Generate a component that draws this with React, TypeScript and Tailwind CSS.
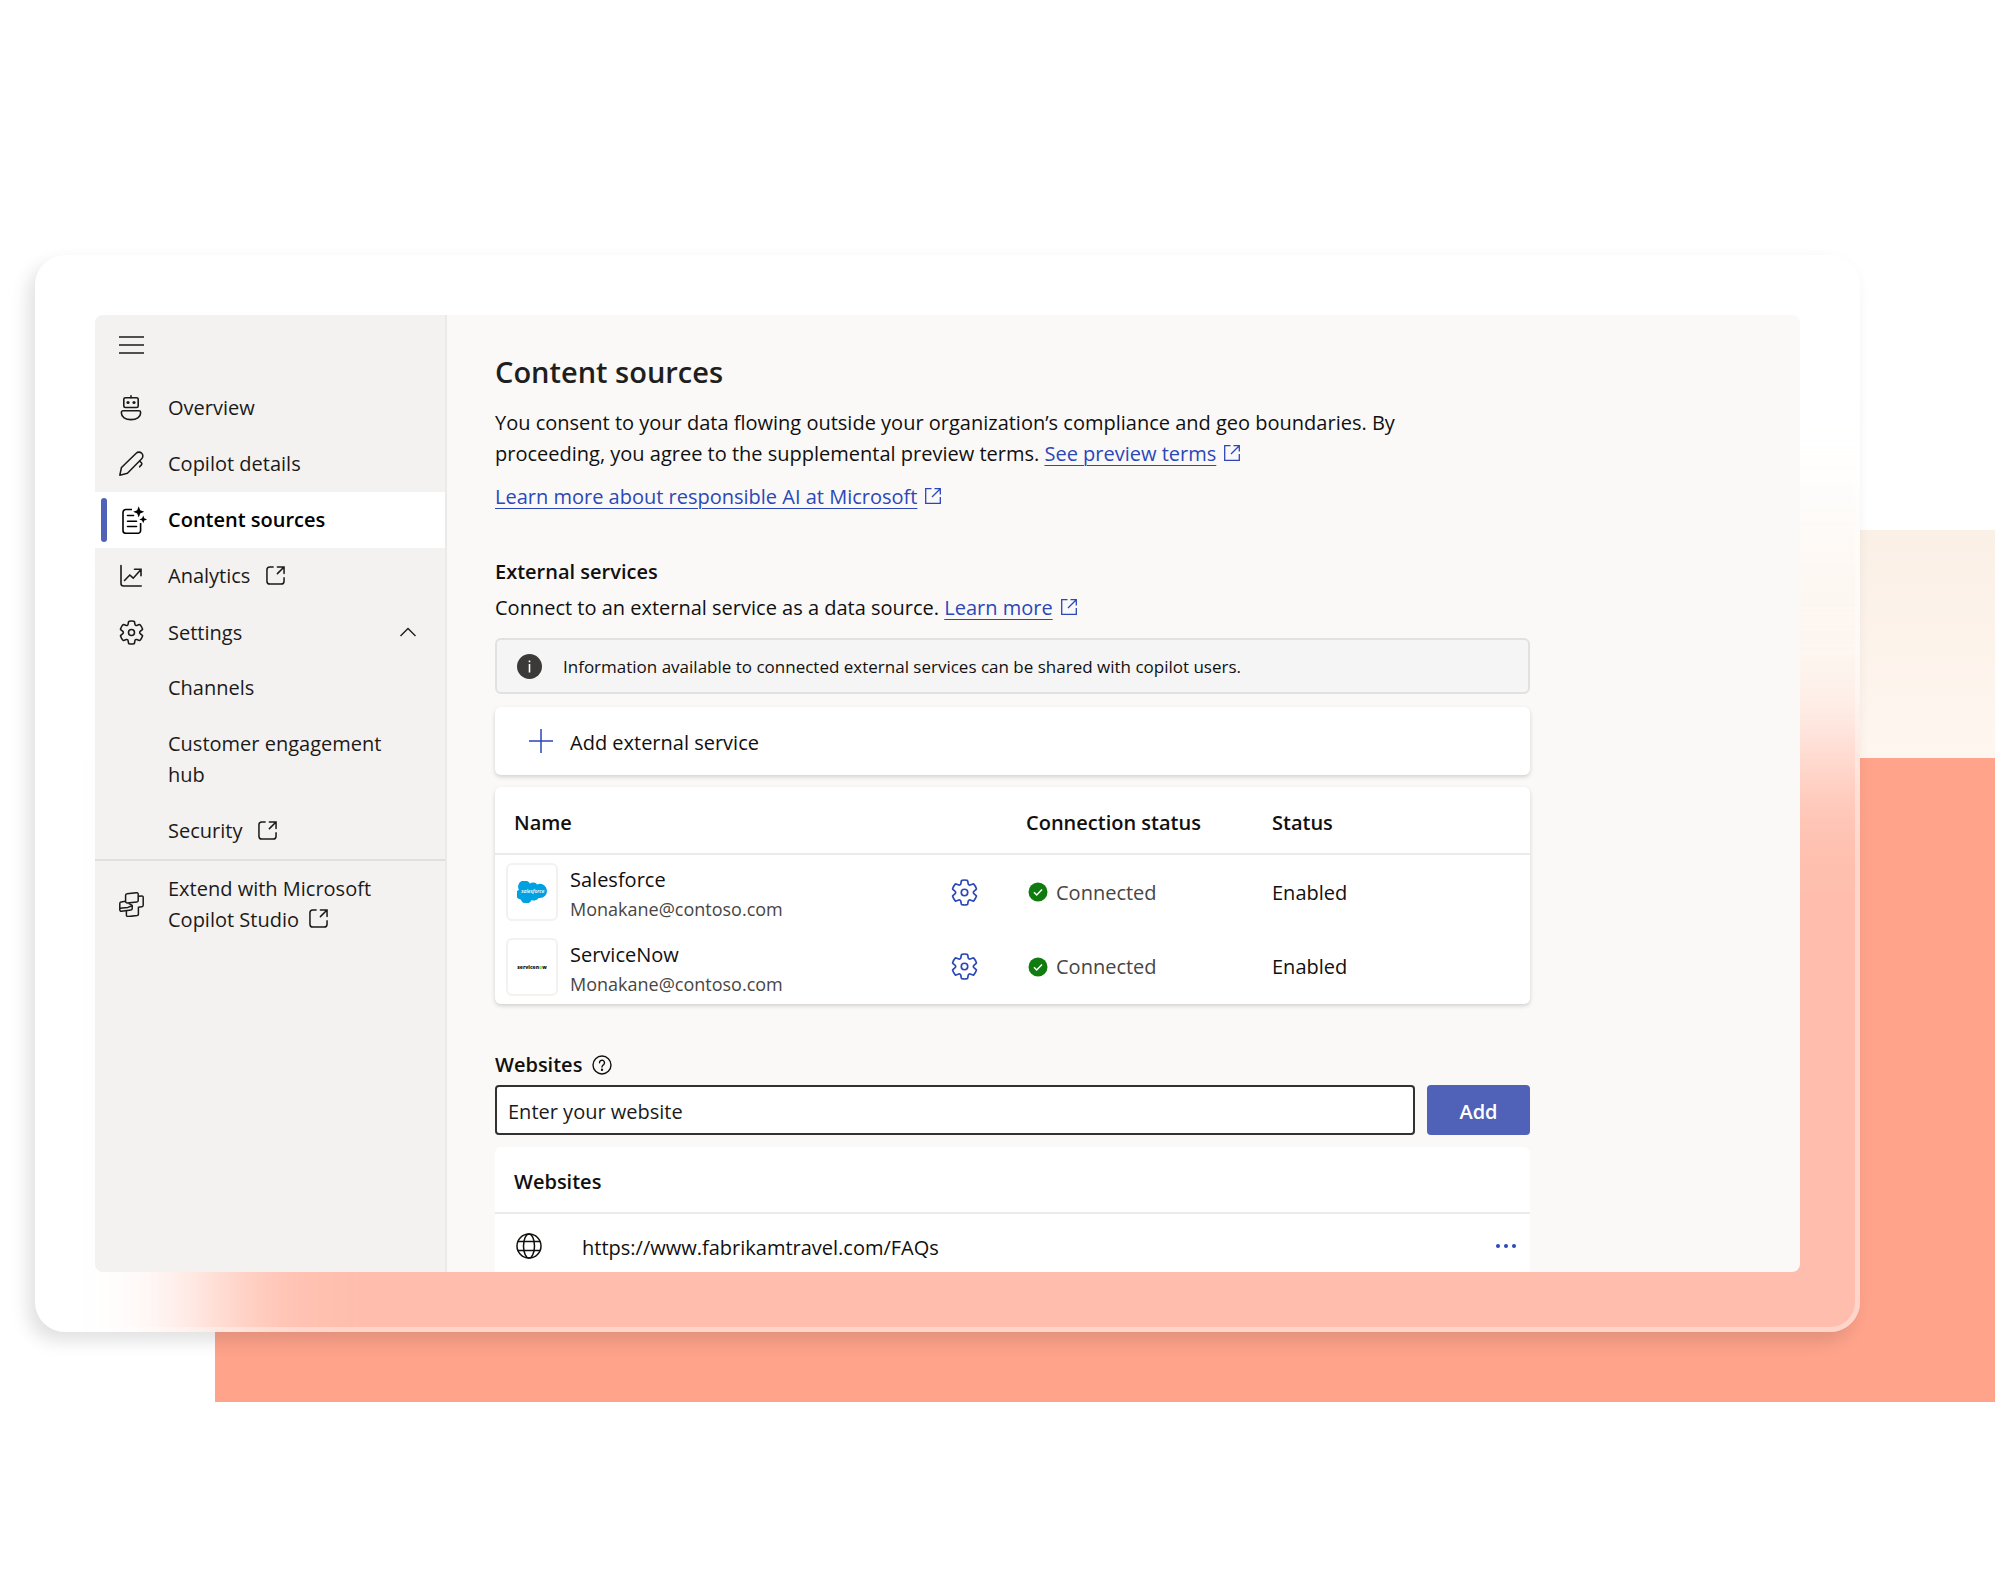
import { useState } from "react";
import type { ReactNode } from "react";

type NavItem = {
  id: string;
  label: string;
  icon?: ReactNode;
  external?: boolean;
};

type Service = {
  id: string;
  name: string;
  account: string;
  logo: ReactNode;
};

const GEAR_PATH =
  "M1.91 7.38A8.5 8.5 0 0 1 3.7 4.3a.5.5 0 0 1 .54-.13l1.92.68a1 1 0 0 0 1.32-.76l.36-2a.5.5 0 0 1 .4-.4 8.53 8.53 0 0 1 3.55 0c.2.04.35.2.38.4l.37 2a1 1 0 0 0 1.32.76l1.92-.68a.5.5 0 0 1 .54.13 8.5 8.5 0 0 1 1.78 3.08c.06.2 0 .4-.15.54l-1.56 1.32a1 1 0 0 0 0 1.52l1.56 1.32a.5.5 0 0 1 .15.54 8.5 8.5 0 0 1-1.78 3.08.5.5 0 0 1-.54.13l-1.92-.68a1 1 0 0 0-1.32.76l-.37 2a.5.5 0 0 1-.38.4 8.53 8.53 0 0 1-3.56 0 .5.5 0 0 1-.39-.4l-.36-2a1 1 0 0 0-1.32-.76l-1.92.68a.5.5 0 0 1-.54-.13 8.5 8.5 0 0 1-1.78-3.08.5.5 0 0 1 .15-.54l1.56-1.32a1 1 0 0 0 0-1.52L2.06 7.92a.5.5 0 0 1-.15-.54Z";

function GearIcon({ className = "" }: { className?: string }) {
  return (
    <svg viewBox="0.8 0.8 18.4 18.4" className={className} fill="none" stroke="currentColor" strokeWidth="1.15" aria-hidden="true">
      <path d={GEAR_PATH} />
      <circle cx="10" cy="10" r="2.2" />
    </svg>
  );
}

function BotIcon() {
  return (
    <svg viewBox="0 0 24 26" className="h-[26px] w-6 shrink-0" fill="none" stroke="currentColor" strokeWidth="1.6" aria-hidden="true">
      <path d="M12 .8v2" strokeLinecap="round" />
      <rect x="4.8" y="2.7" width="14.4" height="9.8" rx="1.6" />
      <circle cx="9" cy="7.5" r="1.6" fill="currentColor" stroke="none" />
      <circle cx="15" cy="7.5" r="1.6" fill="currentColor" stroke="none" />
      <path d="M4 15.8h16a1.6 1.6 0 0 1 1.6 1.6v.6c0 4-4 6.6-9.6 6.6S2.4 22 2.4 18v-.6A1.6 1.6 0 0 1 4 15.8Z" />
    </svg>
  );
}

function PenIcon() {
  return (
    <svg viewBox="0 0 24 24" className="size-[25px] shrink-0" fill="none" stroke="currentColor" strokeWidth="1.5" strokeLinejoin="round" strokeLinecap="round" aria-hidden="true">
      <path d="M.8 23.2l1.6-7.4L16.500 2.200a3.700 3.700 0 0 1 5.300 5.300L8.100 21.400Z" />
      <path d="M19.8 9.600l1.700 1.700a1.400 1.400 0 0 1 0 2L19.8 15.200" />
    </svg>
  );
}

function SourcesIcon() {
  return (
    <svg viewBox="-2 0 29 28" className="h-7 w-[29px] shrink-0" fill="none" stroke="currentColor" strokeWidth="1.6" aria-hidden="true">
      <path d="M11 3.500H4.800a2.800 2.800 0 0 0-2.800 2.800v18.200a2.800 2.800 0 0 0 2.800 2.800h12a2.800 2.800 0 0 0 2.800-2.800V17" />
      <path d="M6.500 9.500h6M6.500 15.200h9M6.500 20.500h9" strokeLinecap="round" />
      <path d="M17.700 0.200l1.500 4 4 1.600-4 1.600-1.500 4-1.500-4-4-1.600 4-1.600ZM22.200 9.500l1.100 2.800 2.800 1.100-2.800 1.100-1.100 2.800-1.100-2.800-2.800-1.100 2.800-1.100Z" fill="currentColor" stroke="none" />
    </svg>
  );
}

function AnalyticsIcon() {
  return (
    <svg viewBox="0 0 24 24" className="size-6 shrink-0" fill="none" stroke="currentColor" strokeWidth="1.600" strokeLinecap="round" aria-hidden="true">
      <path d="M2 1.500v18A2.500 2.500 0 0 0 4.500 22H22.200" />
      <path d="M5.500 16.500l5.300-5.500 3.400 3.200 7.600-8.500M15.500 5.300h6.500v6.500" />
    </svg>
  );
}

function ExtendIcon() {
  return (
    <svg viewBox="0 0 25 25" className="size-[25px] shrink-0" fill="none" stroke="currentColor" strokeWidth="1.500" strokeLinejoin="round" aria-hidden="true">
      <path d="M8 1.800l9.500-1.100a1.500 1.500 0 0 1 1.700 1.500v6.200a1.500 1.500 0 0 1-1.400 1.500l-9.500 1a1.500 1.500 0 0 1-1.700-1.500V3.300A1.500 1.500 0 0 1 8 1.800Z" />
      <path d="M6.600 9.300l-4.500.6A1.500 1.500 0 0 0 .8 11.400v6.300a1.500 1.500 0 0 0 1.700 1.500l9.400-1.100a1.500 1.500 0 0 0 1.300-1.500v-3.300l-3.600-1.900" />
      <path d="M.8 16.300l8-.9 4.400-1.700" />
      <path d="M19.200 4.300l3.600-.4a1.300 1.300 0 0 1 1.400 1.300v8a1.500 1.500 0 0 1-1.300 1.500l-3.500.5v6.900a1.500 1.500 0 0 1-1.300 1.500l-9 1a1.500 1.500 0 0 1-1.700-1.500v-4.200" />
    </svg>
  );
}

function OpenIcon({ className = "" }: { className?: string }) {
  return (
    <svg viewBox="0 0 20 20" className={className} fill="none" stroke="currentColor" strokeWidth="1.6" strokeLinecap="round" aria-hidden="true">
      <path d="M7.500 1H4a3 3 0 0 0-3 3v12a3 3 0 0 0 3 3h12a3 3 0 0 0 3-3v-3.500M12 1h7v7M19 1l-7 7" />
    </svg>
  );
}

function LinkIcon() {
  return (
    <svg viewBox="0 0 16 16" className="ml-2 inline-block size-4 align-baseline" fill="none" stroke="currentColor" strokeWidth="1.3" aria-hidden="true">
      <path d="M6.500 .7H.7v14.600h14.600V9M9.500 .7h5.800v5.800M15.300 .7L7 9" />
    </svg>
  );
}

function SalesforceLogo() {
  return (
    <svg viewBox="0 0 31 22" className="h-[22px] w-[31px] shrink-0" role="img" aria-label="Salesforce">
      <path
        fill="#00a1e0"
        d="M12.900 2.600A5.400 5.400 0 0 1 20.200 3.400a6.700 6.700 0 0 1 2.700-.6 7.100 7.100 0 0 1 0 14.200c-.5 0-1 0-1.400-.1a5.200 5.200 0 0 1-6.800 2.200 6 6 0 0 1-11-.500A5.200 5.200 0 0 1 1.900 8.800 6 6 0 0 1 12.900 2.600Z"
      />
      <text x="15.800" y="12.200" textAnchor="middle" fontSize="5" fontStyle="italic" fontWeight="600" fill="#fff" className="font-['Open_Sans',sans-serif]">
        salesforce
      </text>
    </svg>
  );
}

function ServiceNowLogo() {
  return (
    <svg viewBox="0 0 38 16" className="h-4 w-[38px] shrink-0" role="img" aria-label="ServiceNow">
      <text x="19" y="10" textAnchor="middle" fontSize="5" fontWeight="800" fill="#111" className="font-['Open_Sans',sans-serif]">
        servicen<tspan fill="#62d84e">o</tspan>w
      </text>
    </svg>
  );
}

const mainItems: NavItem[] = [
  { id: "overview", label: "Overview", icon: <BotIcon /> },
  { id: "details", label: "Copilot details", icon: <PenIcon /> },
  { id: "sources", label: "Content sources", icon: <SourcesIcon /> },
  { id: "analytics", label: "Analytics", icon: <AnalyticsIcon />, external: true },
];

const settingsItems: NavItem[] = [
  { id: "channels", label: "Channels" },
  { id: "hub", label: "Customer engagement hub" },
  { id: "security", label: "Security", external: true },
];

const services: Service[] = [
  { id: "salesforce", name: "Salesforce", account: "Monakane@contoso.com", logo: <SalesforceLogo /> },
  { id: "servicenow", name: "ServiceNow", account: "Monakane@contoso.com", logo: <ServiceNowLogo /> },
];

const websites = ["https://www.fabrikamtravel.com/FAQs"];

function NavLink({
  item,
  active,
  onSelect,
}: {
  item: NavItem;
  active: boolean;
  onSelect: (id: string) => void;
}) {
  return (
    <a
      href={`#${item.id}`}
      onClick={() => onSelect(item.id)}
      aria-current={active ? "page" : undefined}
      className={`flex items-center pb-[13px] pl-1.5 pr-6 pt-3 ${active ? "bg-white font-semibold text-black" : ""}`}
    >
      <span className={`-my-2 h-11 w-1.5 shrink-0 rounded-full ${active ? "bg-[#4f62b8]" : ""}`} />
      <span className="ml-3 flex w-6 shrink-0">{item.icon}</span>
      <span className="ml-[25px]">{item.label}</span>
      {item.external && <OpenIcon className="ml-4 size-[19px]" />}
    </a>
  );
}

function Sidebar() {
  const [current, setCurrent] = useState("sources");
  const [open, setOpen] = useState(true);

  return (
    <aside className="w-[352px] shrink-0 border-r-2 border-[#ebeae9] bg-[#f3f2f1] leading-[31px] text-[#1b1a19]">
      <button type="button" aria-label="Toggle navigation" className="mb-[5px] flex h-15 items-center px-6">
        <svg viewBox="0 0 26 18" className="h-[18px] w-[26px]" stroke="currentColor" strokeWidth="1.6" aria-hidden="true">
          <path d="M0 1h25M0 9h25M0 17h25" />
        </svg>
      </button>

      <nav>
        {mainItems.map((item) => (
          <NavLink key={item.id} item={item} active={current === item.id} onSelect={setCurrent} />
        ))}

        <button
          type="button"
          aria-expanded={open}
          onClick={() => setOpen(!open)}
          className="flex h-14 w-full items-center pl-6 pr-[29px] text-left"
        >
          <GearIcon className="size-[25px] shrink-0" />
          <span className="ml-6 flex-1">Settings</span>
          <svg viewBox="0 0 16 10" className={`h-2.5 w-4 ${open ? "" : "rotate-180"}`} fill="none" stroke="currentColor" strokeWidth="1.3" aria-hidden="true">
            <path d="M.5 9L8 1.500 15.500 9" />
          </svg>
        </button>

        {open &&
          settingsItems.map((item) => (
            <NavLink key={item.id} item={item} active={current === item.id} onSelect={setCurrent} />
          ))}

        <a href="#studio" className="flex items-center border-t-2 border-[#e1dfdd] px-6 py-3">
          <ExtendIcon />
          <span className="ml-6 flex-1">
            Extend with Microsoft Copilot Studio
            <OpenIcon className="ml-2.5 inline-block size-[19px] align-[-1px]" />
          </span>
        </a>
      </nav>
    </aside>
  );
}

function ExternalLink({ href, children }: { href: string; children: ReactNode }) {
  return (
    <a href={href} className="whitespace-nowrap text-[#2b47b8]">
      <span className="underline decoration-1 underline-offset-4">{children}</span>
      <LinkIcon />
    </a>
  );
}

function ServicesTable() {
  return (
    <div className="mt-3 rounded-md bg-white shadow-[0_2px_4px_rgba(0,0,0,0.16)]">
      <table className="w-full table-fixed text-left">
        <colgroup>
          <col className="w-[431px]" />
          <col className="w-[76px]" />
          <col className="w-[246px]" />
          <col />
        </colgroup>
        <thead>
          <tr className="h-[67px] border-b-2 border-[#edebe9]">
            <th className="pl-[19px] pt-1 font-semibold">Name</th>
            <td />
            <th className="pl-6 pt-1 font-semibold">Connection status</th>
            <th className="pl-6 pt-1 font-semibold">Status</th>
          </tr>
        </thead>
        <tbody>
          {services.map((service) => (
            <tr key={service.id} className="h-[75px]">
              <td className="pl-[11px]">
                <div className="flex items-center gap-3">
                  <div className="flex h-[58px] w-[52px] shrink-0 items-center justify-center rounded-md border-2 border-[#f3f2f1]">
                    {service.logo}
                  </div>
                  <div className="pt-1">
                    <div className="leading-[30px]">{service.name}</div>
                    <div className="text-[18px] leading-7 text-[#484644]">{service.account}</div>
                  </div>
                </div>
              </td>
              <td>
                <button type="button" aria-label={`${service.name} settings`} className="mx-auto block text-[#2b47b8]">
                  <GearIcon className="size-[27px]" />
                </button>
              </td>
              <td className="pl-[26px]">
                <span className="flex items-center gap-2 text-[#484644]">
                  <svg viewBox="0 0 20 20" className="size-5" aria-hidden="true">
                    <circle cx="10" cy="10" r="9.500" fill="#107c10" />
                    <path d="M6 10.300l2.700 2.700L14 7.500" fill="none" stroke="#fff" strokeWidth="1.500" />
                  </svg>
                  Connected
                </span>
              </td>
              <td className="pl-6">Enabled</td>
            </tr>
          ))}
        </tbody>
      </table>
    </div>
  );
}

function Websites() {
  return (
    <section className="mt-[45px]">
      <div className="flex items-center gap-2.5">
        <label htmlFor="website" className="font-semibold">
          Websites
        </label>
        <button type="button" aria-label="About websites">
          <svg viewBox="0 0 20 20" className="size-5" fill="none" stroke="currentColor" strokeWidth="1.4" strokeLinecap="round" aria-hidden="true">
            <circle cx="10" cy="10" r="9" />
            <path d="M7.500 7.700a2.500 2.500 0 1 1 4.300 1.800c-.9.900-1.800 1.300-1.800 2.500" />
            <circle cx="10" cy="14.700" r=".5" fill="currentColor" />
          </svg>
        </button>
      </div>

      <form className="mt-[5px] flex gap-3" onSubmit={(e) => e.preventDefault()}>
        <input
          id="website"
          type="text"
          placeholder="Enter your website"
          className="h-[50px] min-w-0 flex-1 rounded-sm border-2 border-[#323130] bg-white px-[11px] pt-0.5 placeholder:text-[#1b1a19]"
        />
        <button type="submit" className="h-[50px] w-[103px] rounded-sm bg-[#4f62b8] pt-0.5 font-semibold text-white">
          Add
        </button>
      </form>

      <div className="mt-3 rounded-t-md bg-white">
        <h3 className="flex h-[67px] items-center border-b-2 border-[#edebe9] px-[19px] pt-1 font-semibold">Websites</h3>
        <ul>
          {websites.map((url) => (
            <li key={url} className="flex h-[58px] items-center pl-[21px] pr-3 pt-1.5">
              <svg viewBox="0 0 26 26" className="size-[26px]" fill="none" stroke="currentColor" strokeWidth="1.5" aria-hidden="true">
                <circle cx="13" cy="13" r="12" />
                <ellipse cx="13" cy="13" rx="5.500" ry="12" />
                <path d="M2 8.500h22M2 17.500h22" />
              </svg>
              <span className="ml-10 flex-1 pt-0.5">{url}</span>
              <button type="button" aria-label="More options" className="text-[#2b47b8]">
                <svg viewBox="0 0 24 6" className="h-1.5 w-6" fill="currentColor" aria-hidden="true">
                  <circle cx="4" cy="3" r="2" />
                  <circle cx="12" cy="3" r="2" />
                  <circle cx="20" cy="3" r="2" />
                </svg>
              </button>
            </li>
          ))}
        </ul>
      </div>
    </section>
  );
}

export default function App() {
  return (
    <div className="bg-white pb-[188px] font-['Open_Sans','Noto_Sans',sans-serif] text-[20px] leading-[31px] text-[#11100f]">
      {/* backdrop and window share one grid cell */}
      <div className="grid">
        <div className="col-start-1 row-start-1 ml-[215px] mr-[5px] mt-[530px] flex flex-col">
          <div className="h-[228px] bg-linear-to-b from-[#faf0e6] to-[#fff6f0]" />
          <div className="flex-1 bg-[#ffa38b]" />
        </div>

        <div className="relative col-start-1 row-start-1 mb-[70px] ml-[35px] mr-[140px] mt-[255px] overflow-hidden rounded-[30px] bg-white p-[60px] shadow-[-7px_9px_18px_rgba(0,0,0,0.12)]">
          {/* frosted copy of the backdrop, runs past the frame so the blur stays even at the edges */}
          <div className="absolute -bottom-50 -right-50 left-[180px] top-[275px] flex flex-col opacity-70 blur-[60px]">
            <div className="h-[228px] bg-linear-to-b from-[#faf0e6] to-[#fff6f0]" />
            <div className="flex-1 bg-[#ffa38b]" />
          </div>
          <div className="pointer-events-none absolute inset-0 rounded-[30px] border-[5px] border-white/35" />

          <div className="relative flex overflow-hidden rounded-lg bg-[#faf9f8]">
            <Sidebar />
            <main className="min-w-0 flex-1 px-12 pt-[37px]">
              <div className="max-w-[1035px]">
                <h1 className="text-[29px] font-semibold leading-10 text-[#201f1e]">Content sources</h1>
                <p className="mt-[15px] max-w-[940px]">
                  You consent to your data flowing outside your organization’s compliance and geo boundaries. By
                  proceeding, you agree to the supplemental preview terms.{" "}
                  <ExternalLink href="#preview-terms">See preview terms</ExternalLink>
                </p>
                <p className="mt-3">
                  <ExternalLink href="#responsible-ai">Learn more about responsible AI at Microsoft</ExternalLink>
                </p>

                <h2 className="mt-11 font-semibold">External services</h2>
                <p className="mt-[5px]">
                  Connect to an external service as a data source.{" "}
                  <ExternalLink href="#external-services">Learn more</ExternalLink>
                </p>

                <div className="mt-[15px] flex h-14 items-center gap-[21px] rounded-md border-2 border-[#e1e1e1] bg-[#f5f5f5] px-5 text-[17px]">
                  <svg viewBox="0 0 25 25" className="size-[25px]" aria-hidden="true">
                    <circle cx="12.500" cy="12.500" r="12.500" fill="#3b3a39" />
                    <path d="M12.500 10v8.500M12.500 6.500v1.800" stroke="#fff" strokeWidth="1.600" />
                  </svg>
                  Information available to connected external services can be shared with copilot users.
                </div>

                <button type="button" className="mt-[13px] flex h-[68px] w-full items-center gap-[17px] rounded-md bg-white pl-[34px] text-left shadow-[0_2px_4px_rgba(0,0,0,0.16)]">
                  <svg viewBox="0 0 24 24" className="size-6" stroke="#2b47b8" strokeWidth="1.5" aria-hidden="true">
                    <path d="M12 0v24M0 12h24" />
                  </svg>
                  <span className="pt-0.5">Add external service</span>
                </button>

                <ServicesTable />
                <Websites />
              </div>
            </main>
          </div>
        </div>
      </div>
    </div>
  );
}
